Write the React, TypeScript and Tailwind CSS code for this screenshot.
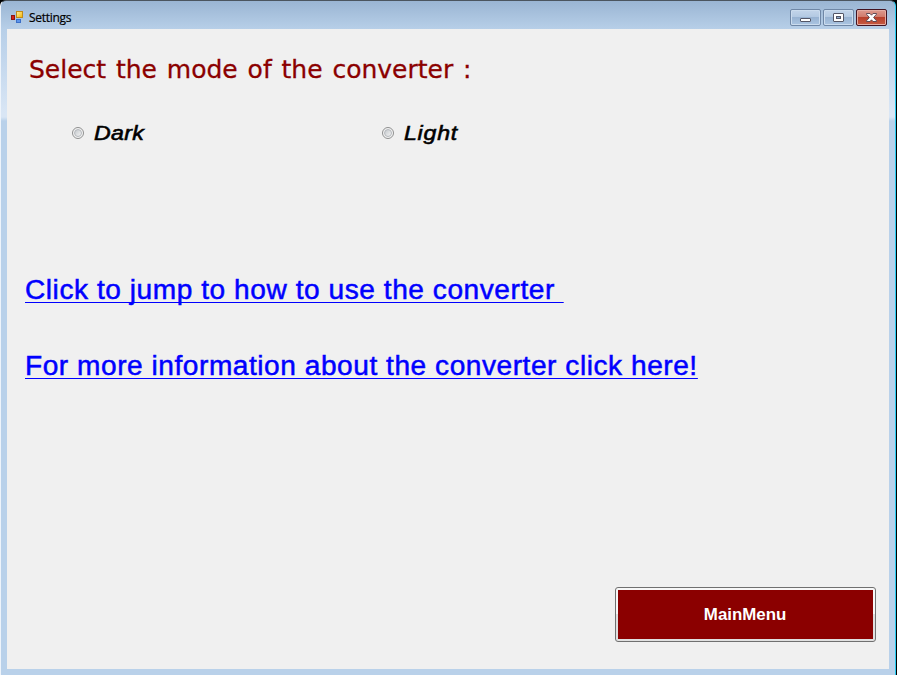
import React from "react";

function AppIcon() {
  return (
    <svg width="14" height="13" viewBox="0 0 14 13" shapeRendering="crispEdges">
      <defs>
        <linearGradient id="gold" x1="0" y1="0" x2="1" y2="1">
          <stop offset="0" stopColor="#fff0a0" />
          <stop offset="1" stopColor="#f5b400" />
        </linearGradient>
      </defs>
      <rect x="1.5" y="4.5" width="3" height="4" fill="#d82018" stroke="#8d1710" />
      <rect x="6.5" y="0.5" width="6" height="6" fill="url(#gold)" stroke="#c08a18" />
      <rect x="6.5" y="8.5" width="4" height="3" fill="#5c94ea" stroke="#3a6fc8" />
    </svg>
  );
}

function CaptionButton({ kind }: { kind: "min" | "max" | "close" }) {
  const close = kind === "close";
  return (
    <button
      aria-label={kind}
      className={
        close
          ? "flex h-[17px] w-[31px] items-center justify-center rounded-[2px] border border-[#431422] bg-[linear-gradient(#dd9a8e_0%,#d07a6b_46%,#b8402b_50%,#c65a42_100%)] shadow-[inset_0_0_0_1px_#e5ada3]"
          : "flex h-[17px] w-[31px] items-center justify-center rounded-[2px] border border-[#6f87a6] bg-[linear-gradient(#c3d5ea_0%,#b3c9e2_46%,#98b3d2_50%,#abc5e2_100%)] shadow-[inset_0_0_0_1px_#cbdcee]"
      }
    >
      <svg width="13" height="11" viewBox="0 0 13 11">
        {kind === "min" && (
          <rect x="1.5" y="6.5" width="10" height="3" rx="0.5" fill="#fff" stroke="#535666" />
        )}
        {kind === "max" && (
          <>
            <rect x="1.5" y="1.5" width="10" height="8" rx="0.5" fill="#fff" stroke="#535666" />
            <rect x="4.5" y="4.5" width="4" height="2" fill="#8fabcc" stroke="#535666" />
          </>
        )}
        {close && (
          <path
            d="M1.5 1.5 H5 L6.5 3.2 L8 1.5 H11.5 V2.2 L8.6 5.5 L11.5 8.8 V9.5 H8 L6.5 7.8 L5 9.5 H1.5 V8.8 L4.4 5.5 L1.5 2.2 Z"
            fill="#fff"
            stroke="#53424d"
            strokeWidth="0.9"
          />
        )}
      </svg>
    </button>
  );
}

function Radio({ label, className, textClass }: { label: string; className: string; textClass: string }) {
  return (
    <label className={"flex h-6 items-center " + className}>
      <span className="mr-[10px] flex size-3 shrink-0 items-center justify-center rounded-full border border-[#8e8f8f] bg-[#f4f4f4]">
        <span className="size-2 rounded-full border border-[#b4b8bc] bg-[linear-gradient(135deg,#c5c9cd,#f3f3f3)]" />
      </span>
      <span className={"origin-left text-black [-webkit-text-stroke:0.6px_black] " + textClass}>{label}</span>
    </label>
  );
}

export default function App() {
  return (
    <div className="flex h-[675px] w-[897px] overflow-hidden bg-black font-['Liberation_Sans',sans-serif]">
      <div className="flex min-w-0 flex-1 flex-col rounded-t-[6px] border-l border-t border-r border-l-[#eef4fb] border-t-[#4b555f] border-r-[#27cdf2] bg-[linear-gradient(#9ab5d3_0px,#b7cfe8_28px,#c3d7ed_60px,#d9e6f5_112px,#d9e6f5_116px,#b9d1ea_120px)] px-[6px]">
        <header className="flex h-7 shrink-0 items-start justify-between">
          <div className="flex pl-[3px] pt-[10px]">
            <AppIcon />
            <span className="ml-[5px] mt-[-1px] font-['Open_Sans',sans-serif] text-[12px] leading-[16px] text-black tracking-[-0.3px] [-webkit-text-stroke:0.2px_black]">Settings</span>
          </div>
          <div className="mr-[2px] mt-[8px] flex gap-[2px]">
            <CaptionButton kind="min" />
            <CaptionButton kind="max" />
            <CaptionButton kind="close" />
          </div>
        </header>
        <main className="flex h-[640px] shrink-0 flex-col items-start bg-[#f0f0f0]">
          <h1 className="ml-[22px] mt-[25px] h-8 whitespace-nowrap font-['DejaVu_Sans',sans-serif] text-[25px] leading-8 text-[#8b0000] [-webkit-text-stroke:0.3px_#8b0000] [word-spacing:1.9px]">
            Select the mode of the converter :
          </h1>
          <div className="mt-[35px] flex h-6">
            <Radio label="Dark" className="ml-[65px] w-[310px]" textClass="text-[21px] italic leading-6 tracking-[0.3px] scale-x-[1.1]" />
            <Radio label="Light" className="" textClass="text-[21px] italic leading-6 tracking-[0.7px] scale-x-[1.1]" />
          </div>
          <a className="ml-[18px] mt-[129px] h-8 whitespace-pre text-[27px] leading-8 text-[#0000ff] [-webkit-text-stroke:0.5px_#0000ff]">
            <span className="inline-block h-[29px] origin-left scale-x-[1.04] border-b border-[#0000ff] tracking-[0.53px]">{"Click to jump to how to use the converter "}</span>
          </a>
          <a className="ml-[18px] mt-[44px] h-8 whitespace-pre text-[27px] leading-8 text-[#0000ff] [-webkit-text-stroke:0.5px_#0000ff]">
            <span className="inline-block h-[29px] origin-left scale-x-[1.04] border-b border-[#0000ff] tracking-[0.52px]">For more information about the converter click here!</span>
          </a>
          <button className="mb-[27px] ml-[608px] mt-auto flex h-[55px] w-[261px] rounded-[3px] border border-[#707070] bg-[linear-gradient(#f7f7f7_50%,#e0e0e0_50%)] p-[2px]">
            <span className="flex size-full items-center justify-center bg-[#8b0000] text-[16px] font-bold text-white">
              <span className="scale-x-[1.055]">MainMenu</span>
            </span>
          </button>
        </main>
      </div>
      <div className="w-px shrink-0 bg-black" />
    </div>
  );
}
